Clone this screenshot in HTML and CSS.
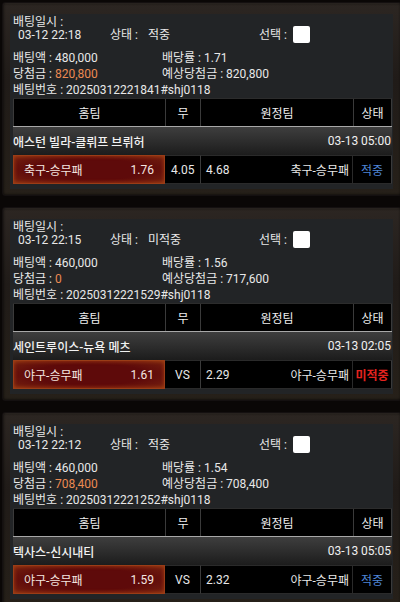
FILE: index.html
```html
<!DOCTYPE html>
<html lang="ko">
<head>
<meta charset="utf-8">
<link rel="stylesheet" href="styles.css">
</head>
<body>
<div class="list">

  <div class="card">
    <div class="panel">
      <div class="info">
        <div class="r1">
          <div class="c-date"><div>배팅일시 :</div><div class="dt">03-12 22:18</div></div>
          <div class="c-state">상태 :<span class="sv">적중</span></div>
          <div class="c-sel">선택 :<span class="cb"></span></div>
        </div>
        <div class="rw"><span class="l">배팅액 : 480,000</span><span class="r">배당률 : 1.71</span></div>
        <div class="rw"><span class="l">당첨금 : <span class="win">820,800</span></span><span class="r">예상당첨금 : 820,800</span></div>
        <div class="rw"><span class="l">베팅번호 : 20250312221841#shj0118</span></div>
      </div>
      <div class="bt">
        <div class="hd">
          <div class="h">홈팀</div><div class="h">무</div><div class="h">원정팀</div><div class="h">상태</div>
        </div>
        <div class="match"><span class="mt">애스턴 빌라-클뤼프 브뤼허</span><span class="md">03-13 05:00</span></div>
        <div class="bet">
          <div class="home"><span>축구-승무패</span><span>1.76</span></div>
          <div class="draw">4.05</div>
          <div class="away"><span>4.68</span><span>축구-승무패</span></div>
          <div class="st ok">적중</div>
        </div>
      </div>
    </div>
  </div>

  <div class="card">
    <div class="panel">
      <div class="info">
        <div class="r1">
          <div class="c-date"><div>배팅일시 :</div><div class="dt">03-12 22:15</div></div>
          <div class="c-state">상태 :<span class="sv">미적중</span></div>
          <div class="c-sel">선택 :<span class="cb"></span></div>
        </div>
        <div class="rw"><span class="l">배팅액 : 460,000</span><span class="r">배당률 : 1.56</span></div>
        <div class="rw"><span class="l">당첨금 : <span class="win">0</span></span><span class="r">예상당첨금 : 717,600</span></div>
        <div class="rw"><span class="l">베팅번호 : 20250312221529#shj0118</span></div>
      </div>
      <div class="bt">
        <div class="hd">
          <div class="h">홈팀</div><div class="h">무</div><div class="h">원정팀</div><div class="h">상태</div>
        </div>
        <div class="match"><span class="mt">세인트루이스-뉴욕 메츠</span><span class="md">03-13 02:05</span></div>
        <div class="bet">
          <div class="home"><span>야구-승무패</span><span>1.61</span></div>
          <div class="draw vs">VS</div>
          <div class="away"><span>2.29</span><span>야구-승무패</span></div>
          <div class="st miss">미적중</div>
        </div>
      </div>
    </div>
  </div>

  <div class="card">
    <div class="panel">
      <div class="info">
        <div class="r1">
          <div class="c-date"><div>배팅일시 :</div><div class="dt">03-12 22:12</div></div>
          <div class="c-state">상태 :<span class="sv">적중</span></div>
          <div class="c-sel">선택 :<span class="cb"></span></div>
        </div>
        <div class="rw"><span class="l">배팅액 : 460,000</span><span class="r">배당률 : 1.54</span></div>
        <div class="rw"><span class="l">당첨금 : <span class="win">708,400</span></span><span class="r">예상당첨금 : 708,400</span></div>
        <div class="rw"><span class="l">베팅번호 : 20250312221252#shj0118</span></div>
      </div>
      <div class="bt">
        <div class="hd">
          <div class="h">홈팀</div><div class="h">무</div><div class="h">원정팀</div><div class="h">상태</div>
        </div>
        <div class="match"><span class="mt">텍사스-신시내티</span><span class="md">03-13 05:05</span></div>
        <div class="bet">
          <div class="home"><span>야구-승무패</span><span>1.59</span></div>
          <div class="draw vs">VS</div>
          <div class="away"><span>2.32</span><span>야구-승무패</span></div>
          <div class="st ok">적중</div>
        </div>
      </div>
    </div>
  </div>

</div>
</body>
</html>
```

FILE: styles.css
```css
html, body {
  margin: 0;
  padding: 0;
  background: #0a0706;
  width: 400px;
  height: 602px;
  overflow: hidden;
}
body {
  font-family: Roboto, "Noto Sans CJK KR", sans-serif;
  font-size: 12px;
  color: #e8e8e8;
}
.list {
  display: flex;
  flex-direction: column;
  gap: 11px;
  padding: 2px 0 0 2px;
}
.card {
  width: 400px;
  box-sizing: border-box;
  padding: 11px 6px 6px 7px;
  background: linear-gradient(#2c2622, #201b18 40%, #262019);
  border: 1px solid #141010;
  border-radius: 3px;
  box-shadow: inset 0 0 3px rgba(0,0,0,0.9), inset 0 1px 0 #3a322c;
}
.panel {
  width: 383px;
  box-sizing: border-box;
  background: #222426;
  padding: 0 1px 5px 3px;
}
.info {
  padding-top: 2px;
}
.r1 {
  display: flex;
  height: 34px;
}
.c-date {
  width: 97px;
  line-height: 13px;
}
.dt {
  padding-left: 5px;
}
.c-state {
  width: 149px;
  padding-top: 13px;
  line-height: 13px;
  display: flex;
}
.sv {
  margin-left: 10px;
}
.c-sel {
  display: flex;
  align-items: flex-start;
  padding-top: 13px;
  line-height: 13px;
}
.cb {
  display: inline-block;
  width: 17px;
  height: 17px;
  margin-left: 6px;
  margin-top: -3px;
  background: #fff;
  border-radius: 2px;
}
.rw {
  display: flex;
  height: 16px;
  line-height: 16px;
}
.rw .l {
  width: 149px;
  white-space: nowrap;
}
.win {
  color: #ec8a52;
}
.bt {
  width: 379px;
}
.hd {
  display: grid;
  grid-template-columns: 152px 35px 153px 39px;
  height: 28px;
  background: #000;
  border-top: 1px solid #2c2c2c;
  box-sizing: border-box;
}
.h {
  display: flex;
  align-items: center;
  justify-content: center;
  border-left: 1px solid #3a3a3a;
  color: #eee;
}
.h:last-child {
  border-right: 1px solid #3a3a3a;
}
.match {
  display: flex;
  justify-content: space-between;
  align-items: center;
  height: 29px;
  box-sizing: border-box;
  border-top: 1px solid #a8a8a8;
  background: linear-gradient(#3e3e3e, #2a2a2a 60%, #1c1c1c);
  padding: 0 1px 0 0;
}
.mt {
  font-weight: 500;
  color: #f2f2f2;
}
.md {
  color: #f0f0f0;
}
.bet {
  display: grid;
  grid-template-columns: 152px 35px 153px 39px;
  height: 29px;
  background: #000;
}
.home {
  display: flex;
  justify-content: space-between;
  align-items: center;
  padding: 0 10px;
  border: 1px solid #9a3c17;
  background: radial-gradient(ellipse at center, #5e0a0a 55%, #6e1a0e 85%, #7a2a10);
  box-shadow: inset 0 0 4px rgba(200,80,20,0.6);
  color: #f4e6e0;
}
.draw {
  display: flex;
  align-items: center;
  padding-left: 6px;
  border-top: 1px solid #2a2a2a;
  border-bottom: 1px solid #2a2a2a;
}
.draw.vs {
  justify-content: center;
  padding-left: 0;
}
.away {
  display: flex;
  justify-content: space-between;
  align-items: center;
  padding: 0 3px 0 5px;
  border: 1px solid #2a2a2a;
  border-left: 1px solid #3a3a3a;
}
.st {
  display: flex;
  align-items: center;
  justify-content: center;
  border: 1px solid #2a2a2a;
  border-left: 0;
  border-right: 1px solid #3a3a3a;
}
.st.ok {
  color: #4f86d6;
}
.st.miss {
  color: #e3231f;
  font-weight: bold;
}
```
